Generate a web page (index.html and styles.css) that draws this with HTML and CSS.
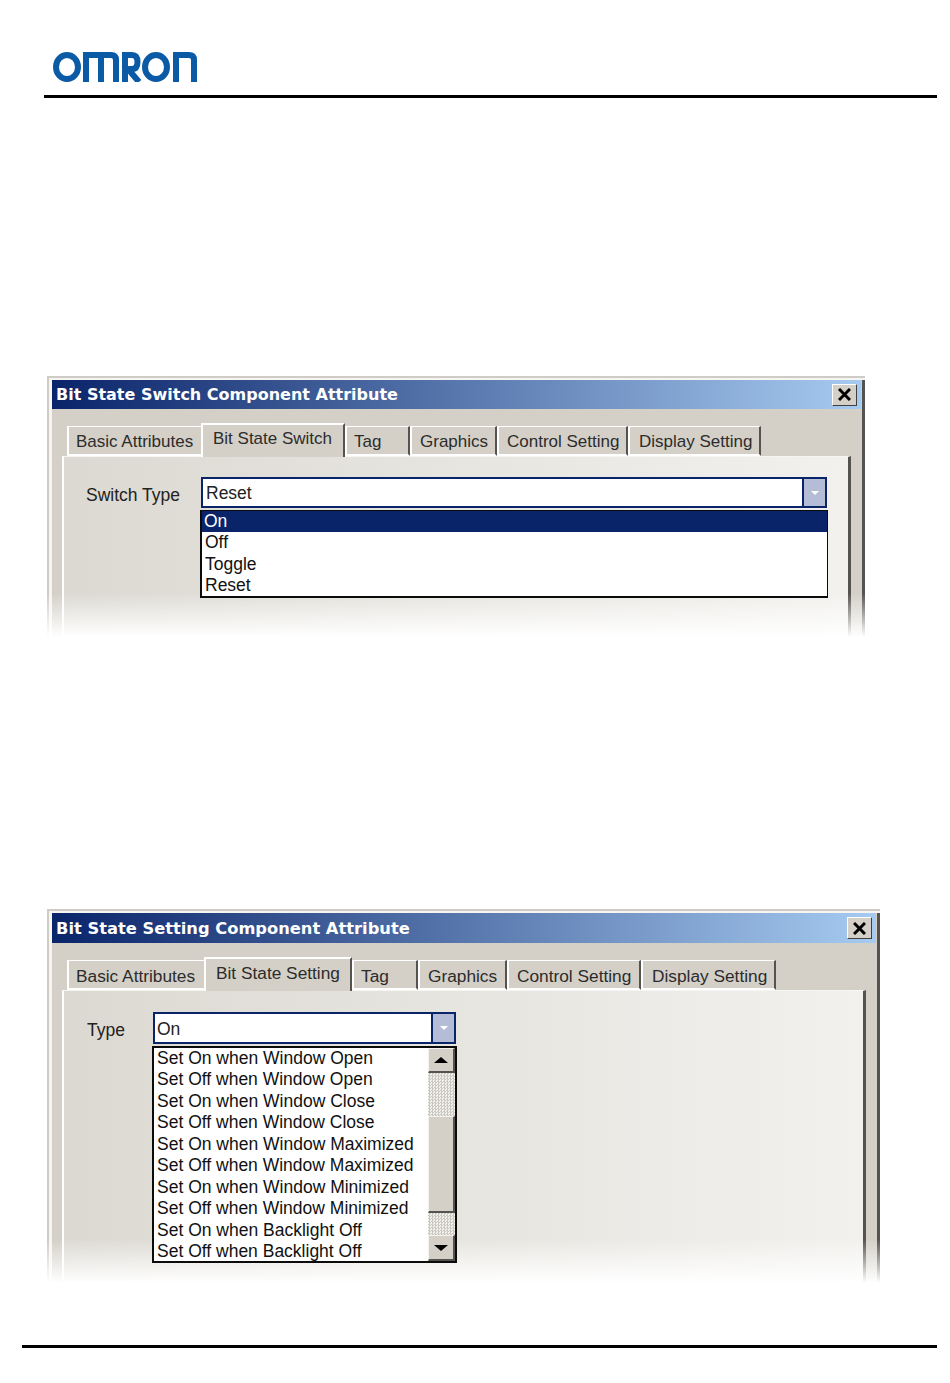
FILE: index.html
```html
<!DOCTYPE html>
<html lang="en">
<head>
  <meta charset="UTF-8">
  <title>Bit State Components</title>
  <link rel="stylesheet" href="styles.css">
</head>
<body>
  <header class="page-header">
    <svg class="logo" width="146" height="30" viewBox="0 0 146 30" fill="none" stroke="#0b5aa5" stroke-width="6" role="img" aria-label="OMRON">
      <ellipse cx="14" cy="15" rx="11" ry="12"/>
      <path d="M33 30V3H58Q63 3 63 8V30M48 3V30"/>
      <path d="M72 30V3H79Q84.5 3 84.5 10T79 17H75L86 30"/>
      <ellipse cx="103" cy="15" rx="11" ry="12"/>
      <path d="M123 30V3H136Q141 3 141 8V30"/>
    </svg>
  </header>

  <!-- First dialog: switch type list -->
  <section class="dialog dialog-switch">
    <div class="titlebar">
      <span>Bit State Switch Component Attribute</span>
      <button class="close-btn" aria-label="Close">
        <svg width="13" height="13" viewBox="0 0 13 13" stroke="#000" stroke-width="3"><path d="M1 1L12 12M12 1L1 12"/></svg>
      </button>
    </div>
    <div class="tabs">
      <div class="tab tab-basic">Basic Attributes</div>
      <div class="tab tab-active tab-main">Bit State Switch</div>
      <div class="tab tab-tag">Tag</div>
      <div class="tab tab-graphics">Graphics</div>
      <div class="tab tab-control">Control Setting</div>
      <div class="tab tab-display">Display Setting</div>
    </div>
    <div class="panel">
      <div class="field">
        <label class="field-label">Switch Type</label>
        <div class="combo-wrap">
          <div class="combo">
            <span class="combo-value">Reset</span>
            <span class="combo-btn"><i class="arrow-white"></i></span>
          </div>
          <ul class="list">
            <li class="selected">On</li>
            <li>Off</li>
            <li>Toggle</li>
            <li>Reset</li>
          </ul>
        </div>
      </div>
    </div>
    <div class="fade"></div>
  </section>

  <!-- Second dialog: type list with scrollbar -->
  <section class="dialog dialog-setting">
    <div class="titlebar">
      <span>Bit State Setting Component Attribute</span>
      <button class="close-btn" aria-label="Close">
        <svg width="13" height="13" viewBox="0 0 13 13" stroke="#000" stroke-width="3"><path d="M1 1L12 12M12 1L1 12"/></svg>
      </button>
    </div>
    <div class="tabs">
      <div class="tab tab-basic">Basic Attributes</div>
      <div class="tab tab-active tab-main">Bit State Setting</div>
      <div class="tab tab-tag">Tag</div>
      <div class="tab tab-graphics">Graphics</div>
      <div class="tab tab-control">Control Setting</div>
      <div class="tab tab-display">Display Setting</div>
    </div>
    <div class="panel">
      <div class="field">
        <label class="field-label">Type</label>
        <div class="combo-wrap">
          <div class="combo">
            <span class="combo-value">On</span>
            <span class="combo-btn"><i class="arrow-white"></i></span>
          </div>
          <div class="list list-scroll">
            <ul>
              <li>Set On when Window Open</li>
              <li>Set Off when Window Open</li>
              <li>Set On when Window Close</li>
              <li>Set Off when Window Close</li>
              <li>Set On when Window Maximized</li>
              <li>Set Off when Window Maximized</li>
              <li>Set On when Window Minimized</li>
              <li>Set Off when Window Minimized</li>
              <li>Set On when Backlight Off</li>
              <li>Set Off when Backlight Off</li>
            </ul>
            <div class="scrollbar">
              <div class="scroll-btn"><i class="arrow-up"></i></div>
              <div class="scroll-track track-top"></div>
              <div class="scroll-thumb"></div>
              <div class="scroll-track track-bottom"></div>
              <div class="scroll-btn scroll-btn-down"><i class="arrow-down"></i></div>
            </div>
          </div>
        </div>
      </div>
    </div>
    <div class="fade"></div>
  </section>

  <footer class="page-footer"></footer>
</body>
</html>
```

FILE: styles.css
```css
body {
  margin: 0;
  background-color: #fff;
  font-family: "Liberation Sans", Arial, sans-serif;
  color: #222;
  height: 1383px;
  overflow: hidden;
}

.page-header {
  margin: 0 13px 0 44px;
  padding: 52px 0 14px 9px;
  border-bottom: 3px solid #000;
  height: 29px;
}

.logo {
  display: block;
}

.page-footer {
  margin: 62px 13px 0 22px;
  border-top: 3px solid #000;
}

/* Dialog frame */
.dialog {
  position: relative;
  margin-left: 47px;
  box-sizing: border-box;
  background-color: #d4d0c8;
  box-shadow: inset 2px 2px 0 #cfccc5, inset 5px 4px 0 #f6f5f2, inset -3px 0 0 #55534f;
  padding: 4px 4px 0 5px;
  overflow: hidden;
}

.dialog-switch {
  margin-top: 278px;
  width: 818px;
  height: 261px;
}

.dialog-setting {
  margin-top: 272px;
  width: 833px;
  height: 374px;
}

.titlebar {
  height: 29px;
  display: flex;
  align-items: center;
  justify-content: space-between;
  padding: 0 4px 0 4px;
  background: linear-gradient(to right, #0a246a, #a6caf0);
  color: #fff;
  font-family: "DejaVu Sans", sans-serif;
  font-weight: bold;
  font-size: 16px;
}

.dialog-setting .titlebar {
  height: 30px;
  font-size: 16.3px;
}

.close-btn {
  width: 25px;
  height: 22px;
  padding: 0;
  display: flex;
  align-items: center;
  justify-content: center;
  background-color: #d4d0c8;
  border: 1px solid;
  border-color: #fff #404040 #404040 #fff;
}

/* Tabs */
.tabs {
  display: flex;
  align-items: flex-end;
  height: 47px;
  padding-left: 15px;
  font-size: 17px;
}

.dialog-setting .tabs {
  font-size: 17.3px;
}

.tab {
  box-sizing: border-box;
  height: 30px;
  padding: 5px 0 0 7px;
  white-space: nowrap;
  background-color: #d4d0c8;
  border-top: 1px solid #fff;
  border-left: 2px solid #fff;
  border-right: 2px solid #55534f;
  border-bottom: 2px solid #fff;
  color: #2c2c2c;
}

.tab-active {
  height: 34px;
  margin-bottom: -1px;
  padding: 4px 0 0 10px;
  border-bottom: 0;
  position: relative;
  z-index: 1;
  border-top-width: 2px;
}

.tab-basic { width: 134px; border-right: 0; }
.tab-tag { width: 65px; }
.tab-graphics { width: 87px; padding-left: 8px; }
.tab-control { width: 131px; padding-left: 8px; }
.tab-display { width: 133px; padding-left: 9px; }

.dialog-switch .tab-main { width: 144px; }
.dialog-setting .tab-basic { width: 137px; }
.dialog-setting .tab-main { width: 148px; }
.dialog-setting .tab-tag { width: 66px; }
.dialog-setting .tab-graphics { width: 89px; }
.dialog-setting .tab-control { width: 134px; }
.dialog-setting .tab-display { width: 135px; }

/* Panel */
.panel {
  box-sizing: border-box;
  height: 300px;
  margin: 0 10px 0 10px;
  padding: 20px 0 0 22px;
  background: linear-gradient(to right, #dcd9d2, #f2f1ee);
  border-left: 2px solid #fff;
  border-top: 1px solid #f6f5f2;
  border-right: 3px solid #55534f;
}

.dialog-setting .panel {
  padding: 21px 0 0 23px;
}

.field {
  display: flex;
  align-items: flex-start;
  font-size: 17.5px;
}

.field-label {
  width: 115px;
  padding-top: 8px;
}

.dialog-setting .field-label {
  width: 66px;
}

/* Sits above the fade, the lists are not washed out */
.combo-wrap {
  position: relative;
  z-index: 3;
  width: 626px;
}

.dialog-setting .combo-wrap {
  width: 303px;
}

.combo {
  box-sizing: border-box;
  display: flex;
  justify-content: space-between;
  height: 31px;
  background-color: #fff;
  border: 2px solid #0a246a;
}

.dialog-setting .combo {
  height: 32px;
}

.combo-value {
  padding: 4px 0 0 3px;
}

.dialog-setting .combo-value {
  padding: 5px 0 0 2px;
}

.combo-btn {
  width: 21px;
  display: flex;
  align-items: center;
  justify-content: center;
  background-color: #b4bcd6;
  border-left: 2px solid #0a246a;
}

.arrow-white {
  border-top: 4px solid #fff;
  border-left: 4px solid transparent;
  border-right: 4px solid transparent;
}

.list {
  box-sizing: border-box;
  list-style: none;
  width: calc(100% + 2px);
  margin: 2px 0 0 -1px;
  padding: 0;
  background-color: #fff;
  border: 2px solid #0b0b0b;
  border-top-width: 1px;
  border-right-width: 1px;
  line-height: 21.3px;
  color: #111;
}

.list li {
  padding-left: 3px;
  white-space: nowrap;
}

.list li.selected {
  background-color: #0a246a;
  color: #fff;
  padding-left: 2px;
}

/* Scrolling list */
.list-scroll {
  display: flex;
  justify-content: space-between;
  height: 217px;
  border-top-width: 2px;
  border-right-width: 2px;
}

.list-scroll ul {
  list-style: none;
  margin: 0;
  padding: 0;
}

.list-scroll li {
  line-height: 21.45px;
}

.scrollbar {
  width: 27px;
  display: flex;
  flex-direction: column;
  flex-shrink: 0;
}

.scroll-btn {
  height: 25px;
  flex-shrink: 0;
  display: flex;
  align-items: center;
  justify-content: center;
  box-sizing: border-box;
  background-color: #d4d0c8;
  border-style: solid;
  border-color: #f4f2ee #55534f #55534f #f4f2ee;
  border-width: 1px 2px 2px 1px;
}

.scroll-btn-down {
  height: 26px;
}

.arrow-up {
  border-bottom: 6px solid #000;
  border-left: 7px solid transparent;
  border-right: 7px solid transparent;
}

.arrow-down {
  border-top: 6px solid #000;
  border-left: 7px solid transparent;
  border-right: 7px solid transparent;
}

.scroll-track {
  flex-shrink: 0;
  background: repeating-conic-gradient(#cbc8c1 0 25%, #f2f1ed 0 50%) 0 0 / 3px 3px;
}

.track-top { height: 43px; }
.track-bottom { height: 22px; }

.scroll-thumb {
  flex: 1;
  background-color: #d4d0c8;
  border-right: 2px solid #55534f;
  border-bottom: 2px solid #55534f;
  border-top: 1px solid #f4f2ee;
  border-left: 1px solid #f4f2ee;
}

/* White fade at the bottom of each screenshot */
.fade {
  position: absolute;
  left: 0;
  right: 0;
  bottom: 0;
  height: 44px;
  background: linear-gradient(to bottom, rgba(255, 255, 255, 0), #fff);
  z-index: 2;
}
```
